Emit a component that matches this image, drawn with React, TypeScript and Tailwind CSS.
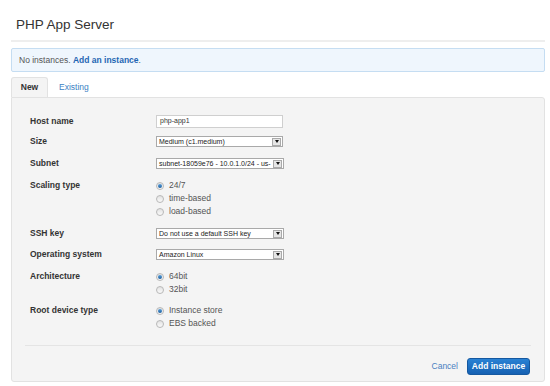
import React from 'react'

const font = { fontFamily: '"Liberation Sans", Arial, sans-serif' }

const Radio = ({ checked, label }: { checked?: boolean; label: string }) => (
  <div className="flex h-[13px] items-center">
    <span className="flex h-[8px] w-[8px] items-center justify-center rounded-full border border-[#b8b8b8] bg-gradient-to-b from-[#e2e2e2] to-[#fafafa]">
      {checked && <span className="h-[4px] w-[4px] rounded-full bg-gradient-to-b from-[#5aa0dc] to-[#1b5f9e]" />}
    </span>
    <span className="ml-[5px] text-[8.5px] leading-[13px] text-[#555]">{label}</span>
  </div>
)

const Select = ({ value, width = 'w-[127px]' }: { value: string; width?: string }) => (
  <div className={`flex h-[11px] ${width} items-center border border-[#a9a9a9] bg-white`}>
    <span className="flex-1 overflow-hidden whitespace-nowrap pl-[2px] text-[7px] leading-[9px] text-[#222]">{value}</span>
    <span className="mr-[1px] flex h-[8px] w-[9px] items-center justify-center border border-[#aaa] bg-[#e6e6e6]">
      <span className="h-0 w-0 border-x-[2px] border-t-[3px] border-x-transparent border-t-[#111]" />
    </span>
  </div>
)

const Row = ({ label, mt, children }: { label: string; mt: string; children: React.ReactNode }) => (
  <div className={`flex ${mt}`}>
    <div className="flex h-[13px] w-[126px] items-center text-[8.5px] font-bold leading-[13px] text-[#333]">{label}</div>
    <div className="flex flex-col justify-center">{children}</div>
  </div>
)

export default function App() {
  return (
    <div className="h-[386px] w-[550px] bg-white pl-[11px] pr-[5px]" style={font}>
      <div className="border-b-2 border-[#eeeeee] pb-[6px] pl-[5px] pt-[16px]">
        <h1 className="text-[13.5px] leading-[18px] text-[#333]">PHP App Server</h1>
      </div>

      <div className="mt-[6px] flex h-[24px] items-center rounded-[2px] border border-[#c5ddf2] bg-[#eff6fd] pl-[7px] text-[8.5px] text-[#555]">
        No instances.&nbsp;<a className="font-bold text-[#1f66b3]">Add an instance</a>.
      </div>

      <div className="mt-[5px] flex h-[20px] items-end">
        <div className="flex h-[20px] w-[37px] items-center justify-center rounded-t-[3px] border border-b-0 border-[#e2e2e2] bg-[#f4f4f4] text-[8.5px] font-bold text-[#333]">
          New
        </div>
        <div className="ml-[11px] flex h-[20px] items-center text-[8.5px] text-[#3b82c4]">Existing</div>
      </div>

      <div className="h-[285px] rounded-b-[3px] rounded-tr-[3px] border border-[#e2e2e2] bg-[#f4f4f4] px-[13px] pt-[17px]">
        <div className="flex flex-col pl-[5px]">
          <Row label="Host name" mt="mt-0">
            <div className="flex h-[13px] w-[127px] items-center border border-[#cfcfcf] bg-white pl-[3px] text-[7px] text-[#333]">
              php-app1
            </div>
          </Row>
          <Row label="Size" mt="mt-[7px]">
            <Select value="Medium (c1.medium)" />
          </Row>
          <Row label="Subnet" mt="mt-[9px]">
            <Select value="subnet-18059e76 - 10.0.1.0/24 - us-" width="w-[128px]" />
          </Row>
          <Row label="Scaling type" mt="mt-[9px]">
            <Radio checked label="24/7" />
            <Radio label="time-based" />
            <Radio label="load-based" />
          </Row>
          <Row label="SSH key" mt="mt-[9px]">
            <Select value="Do not use a default SSH key" width="w-[128px]" />
          </Row>
          <Row label="Operating system" mt="mt-[8px]">
            <Select value="Amazon Linux" width="w-[128px]" />
          </Row>
          <Row label="Architecture" mt="mt-[9px]">
            <Radio checked label="64bit" />
            <Radio label="32bit" />
          </Row>
          <Row label="Root device type" mt="mt-[8px]">
            <Radio checked label="Instance store" />
            <Radio label="EBS backed" />
          </Row>
        </div>

        <div className="mt-[15px] border-t border-[#e4e4e4]" />

        <div className="mt-[12px] flex items-center justify-end pr-[1px]">
          <a className="mr-[9px] text-[8.5px] text-[#4a7fc1]">Cancel</a>
          <button className="flex h-[17px] w-[63px] items-center justify-center rounded-[3px] border border-[#1558a0] bg-gradient-to-b from-[#2a82d4] to-[#1560b2] text-[8.5px] font-bold text-white">
            Add instance
          </button>
        </div>
      </div>
    </div>
  )
}
